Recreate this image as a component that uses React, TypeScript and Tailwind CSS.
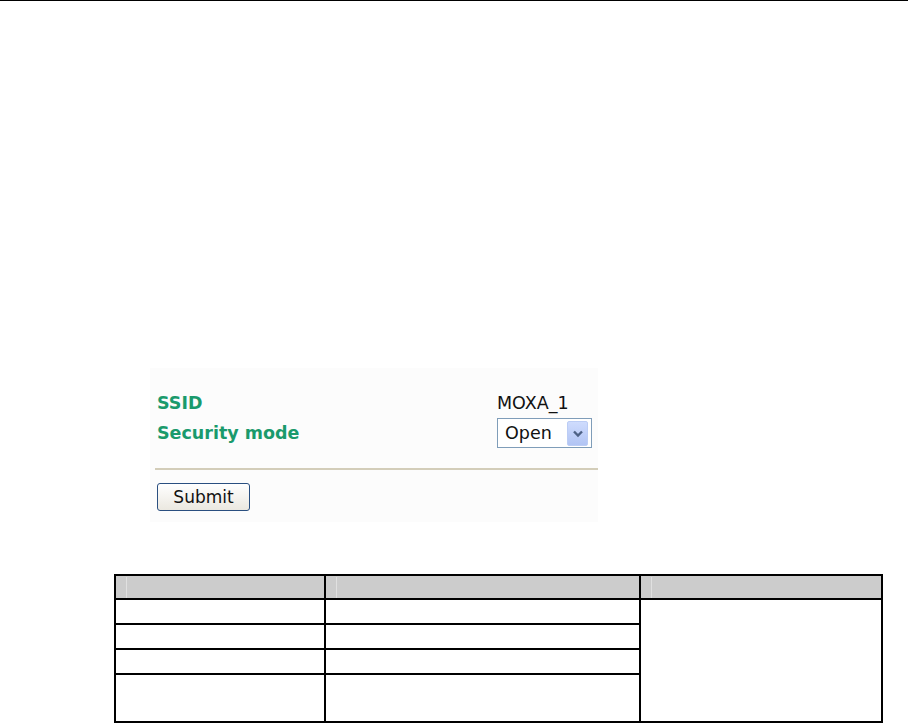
import React from 'react';

const font = { fontFamily: '"DejaVu Sans", Verdana, sans-serif' };

// 표 안의 회색 머리줄 셀 (세로 밝은 줄 포함)
const HeadCell: React.FC<{ w: string }> = ({ w }) => (
  <th className={`${w} h-[24px] p-0 bg-[#cccccc] border-2 border-black`}>
    <div className="ml-[10px] h-[21px] border-l border-[#e0e0e0]" />
  </th>
);

const Cell: React.FC<{ h?: string }> = ({ h = 'h-[25px]' }) => (
  <td className={`${h} p-0 border-2 border-black`} />
);

const App: React.FC = () => {
  return (
    <div className="w-[913px] h-[723px] bg-white overflow-hidden" style={font}>
      <div className="w-[908px] h-px bg-black" />

      {/* 웹 설정 화면 캡처 영역 */}
      <div className="mt-[367px] ml-[150px] w-[448px] bg-[#fcfcfc] pt-[24px] pb-[11px]">
        <div className="flex flex-col gap-[4px] pl-[7px]">
          <div className="flex items-center h-[22px]">
            <span className="w-[340px] text-[17.5px] leading-[22px] font-bold text-[#1a9a6c]">SSID</span>
            <span className="text-[17.5px] leading-[22px] text-[#111]">MOXA_1</span>
          </div>
          <div className="flex items-center h-[30px]">
            <span className="w-[340px] text-[17.5px] leading-[22px] font-bold text-[#1a9a6c]">Security mode</span>
            <div className="w-[95px] h-[30px] border border-[#7f9db9] bg-white flex items-center justify-between pl-[7px] pr-[3px]">
              <span className="text-[17.5px] leading-[22px] text-[#111]">Open</span>
              <div className="w-[21px] h-[25px] rounded-[2px] bg-gradient-to-b from-[#cfdcfd] to-[#b1c4f4] border border-[#bccdf5] flex items-center justify-center">
                <svg width="12" height="9" viewBox="0 0 12 9">
                  <path d="M2 2.5 L6 6.5 L10 2.5" fill="none" stroke="#4d6185" strokeWidth="2.4" />
                </svg>
              </div>
            </div>
          </div>
        </div>

        <div className="mt-[20px] ml-[5px] h-[2px] bg-[#d3cdb9]" />

        <div className="mt-[13px] ml-[7px]">
          <button className="w-[93px] h-[28px] rounded-[3px] border border-[#2a4f80] bg-gradient-to-b from-white to-[#ebe8e0] text-[17px] leading-[22px] text-[#111]">
            Submit
          </button>
        </div>
      </div>

      {/* 설명 표 */}
      <table className="mt-[52px] ml-[114px] w-[767px] border-collapse table-fixed">
        <thead>
          <tr>
            <HeadCell w="w-[210px]" />
            <HeadCell w="w-[315px]" />
            <HeadCell w="w-[242px]" />
          </tr>
        </thead>
        <tbody>
          <tr>
            <Cell />
            <Cell />
            <td rowSpan={4} className="p-0 border-2 border-black" />
          </tr>
          <tr>
            <Cell />
            <Cell />
          </tr>
          <tr>
            <Cell />
            <Cell />
          </tr>
          <tr>
            <Cell h="h-[48px]" />
            <Cell h="h-[48px]" />
          </tr>
        </tbody>
      </table>
    </div>
  );
};

export default App;
